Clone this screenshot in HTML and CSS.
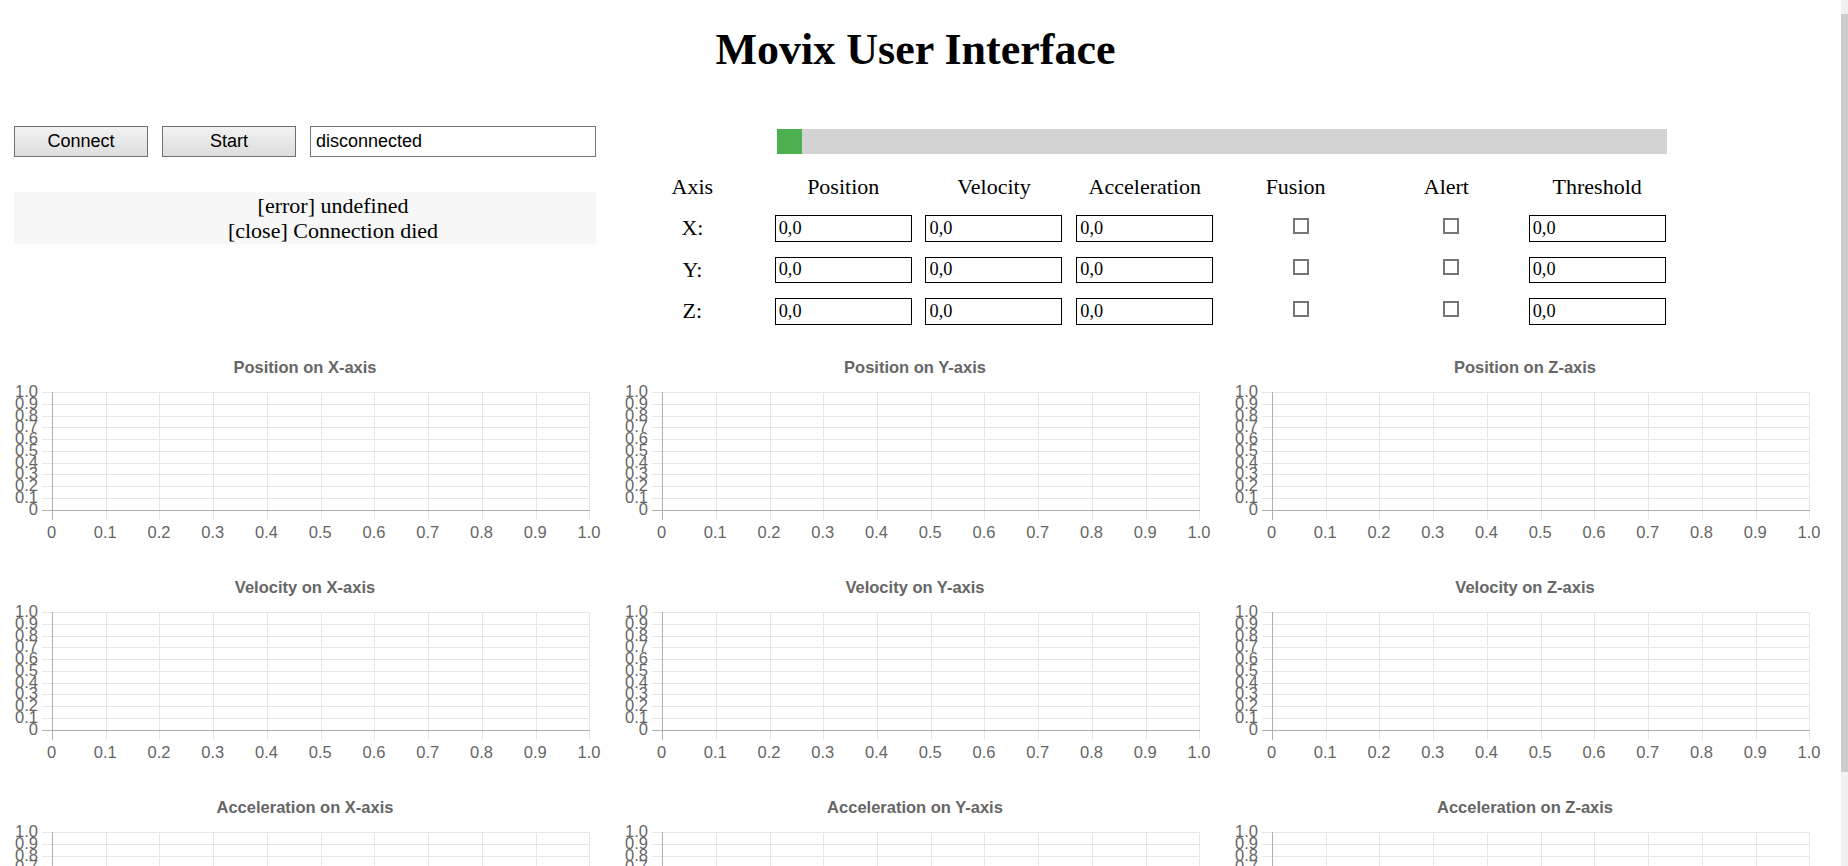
FILE: index.html
```html
<!DOCTYPE html>
<html lang="en">
<head>
<meta charset="utf-8">
<title>Movix User Interface</title>
<link rel="stylesheet" href="styles.css">
</head>
<body>
<div class="page">
  <h1 class="title">Movix User Interface</h1>

  <div class="top">
    <div class="left">
      <div class="controls">
        <button class="btn">Connect</button>
        <button class="btn">Start</button>
        <input class="status" type="text" value="disconnected">
      </div>
      <div class="log">
        <div>[error] undefined</div>
        <div>[close] Connection died</div>
      </div>
    </div>

    <div class="right">
      <div class="progress"><div class="progress-fill"></div></div>
      <div class="table">
        <div class="th">Axis</div>
        <div class="th">Position</div>
        <div class="th">Velocity</div>
        <div class="th">Acceleration</div>
        <div class="th">Fusion</div>
        <div class="th">Alert</div>
        <div class="th">Threshold</div>

        <div class="td">X:</div>
        <div class="td"><input class="num" type="text" value="0,0"></div>
        <div class="td"><input class="num" type="text" value="0,0"></div>
        <div class="td"><input class="num" type="text" value="0,0"></div>
        <div class="td"><input class="check" type="checkbox"></div>
        <div class="td"><input class="check" type="checkbox"></div>
        <div class="td"><input class="num" type="text" value="0,0"></div>

        <div class="td">Y:</div>
        <div class="td"><input class="num" type="text" value="0,0"></div>
        <div class="td"><input class="num" type="text" value="0,0"></div>
        <div class="td"><input class="num" type="text" value="0,0"></div>
        <div class="td"><input class="check" type="checkbox"></div>
        <div class="td"><input class="check" type="checkbox"></div>
        <div class="td"><input class="num" type="text" value="0,0"></div>

        <div class="td">Z:</div>
        <div class="td"><input class="num" type="text" value="0,0"></div>
        <div class="td"><input class="num" type="text" value="0,0"></div>
        <div class="td"><input class="num" type="text" value="0,0"></div>
        <div class="td"><input class="check" type="checkbox"></div>
        <div class="td"><input class="check" type="checkbox"></div>
        <div class="td"><input class="num" type="text" value="0,0"></div>
      </div>
    </div>
  </div>

  <div class="charts">
    <div class="chart">
      <div class="chart-title">Position on X-axis</div>
      <div class="chart-body">
        <div class="y-ticks"><span>1.0</span><span>0.9</span><span>0.8</span><span>0.7</span><span>0.6</span><span>0.5</span><span>0.4</span><span>0.3</span><span>0.2</span><span>0.1</span><span>0</span></div>
        <div class="plot"></div>
      </div>
      <div class="x-ticks"><span>0</span><span>0.1</span><span>0.2</span><span>0.3</span><span>0.4</span><span>0.5</span><span>0.6</span><span>0.7</span><span>0.8</span><span>0.9</span><span>1.0</span></div>
    </div>
    <div class="chart">
      <div class="chart-title">Position on Y-axis</div>
      <div class="chart-body">
        <div class="y-ticks"><span>1.0</span><span>0.9</span><span>0.8</span><span>0.7</span><span>0.6</span><span>0.5</span><span>0.4</span><span>0.3</span><span>0.2</span><span>0.1</span><span>0</span></div>
        <div class="plot"></div>
      </div>
      <div class="x-ticks"><span>0</span><span>0.1</span><span>0.2</span><span>0.3</span><span>0.4</span><span>0.5</span><span>0.6</span><span>0.7</span><span>0.8</span><span>0.9</span><span>1.0</span></div>
    </div>
    <div class="chart">
      <div class="chart-title">Position on Z-axis</div>
      <div class="chart-body">
        <div class="y-ticks"><span>1.0</span><span>0.9</span><span>0.8</span><span>0.7</span><span>0.6</span><span>0.5</span><span>0.4</span><span>0.3</span><span>0.2</span><span>0.1</span><span>0</span></div>
        <div class="plot"></div>
      </div>
      <div class="x-ticks"><span>0</span><span>0.1</span><span>0.2</span><span>0.3</span><span>0.4</span><span>0.5</span><span>0.6</span><span>0.7</span><span>0.8</span><span>0.9</span><span>1.0</span></div>
    </div>

    <div class="chart">
      <div class="chart-title">Velocity on X-axis</div>
      <div class="chart-body">
        <div class="y-ticks"><span>1.0</span><span>0.9</span><span>0.8</span><span>0.7</span><span>0.6</span><span>0.5</span><span>0.4</span><span>0.3</span><span>0.2</span><span>0.1</span><span>0</span></div>
        <div class="plot"></div>
      </div>
      <div class="x-ticks"><span>0</span><span>0.1</span><span>0.2</span><span>0.3</span><span>0.4</span><span>0.5</span><span>0.6</span><span>0.7</span><span>0.8</span><span>0.9</span><span>1.0</span></div>
    </div>
    <div class="chart">
      <div class="chart-title">Velocity on Y-axis</div>
      <div class="chart-body">
        <div class="y-ticks"><span>1.0</span><span>0.9</span><span>0.8</span><span>0.7</span><span>0.6</span><span>0.5</span><span>0.4</span><span>0.3</span><span>0.2</span><span>0.1</span><span>0</span></div>
        <div class="plot"></div>
      </div>
      <div class="x-ticks"><span>0</span><span>0.1</span><span>0.2</span><span>0.3</span><span>0.4</span><span>0.5</span><span>0.6</span><span>0.7</span><span>0.8</span><span>0.9</span><span>1.0</span></div>
    </div>
    <div class="chart">
      <div class="chart-title">Velocity on Z-axis</div>
      <div class="chart-body">
        <div class="y-ticks"><span>1.0</span><span>0.9</span><span>0.8</span><span>0.7</span><span>0.6</span><span>0.5</span><span>0.4</span><span>0.3</span><span>0.2</span><span>0.1</span><span>0</span></div>
        <div class="plot"></div>
      </div>
      <div class="x-ticks"><span>0</span><span>0.1</span><span>0.2</span><span>0.3</span><span>0.4</span><span>0.5</span><span>0.6</span><span>0.7</span><span>0.8</span><span>0.9</span><span>1.0</span></div>
    </div>

    <div class="chart">
      <div class="chart-title">Acceleration on X-axis</div>
      <div class="chart-body">
        <div class="y-ticks"><span>1.0</span><span>0.9</span><span>0.8</span><span>0.7</span><span>0.6</span><span>0.5</span><span>0.4</span><span>0.3</span><span>0.2</span><span>0.1</span><span>0</span></div>
        <div class="plot"></div>
      </div>
      <div class="x-ticks"><span>0</span><span>0.1</span><span>0.2</span><span>0.3</span><span>0.4</span><span>0.5</span><span>0.6</span><span>0.7</span><span>0.8</span><span>0.9</span><span>1.0</span></div>
    </div>
    <div class="chart">
      <div class="chart-title">Acceleration on Y-axis</div>
      <div class="chart-body">
        <div class="y-ticks"><span>1.0</span><span>0.9</span><span>0.8</span><span>0.7</span><span>0.6</span><span>0.5</span><span>0.4</span><span>0.3</span><span>0.2</span><span>0.1</span><span>0</span></div>
        <div class="plot"></div>
      </div>
      <div class="x-ticks"><span>0</span><span>0.1</span><span>0.2</span><span>0.3</span><span>0.4</span><span>0.5</span><span>0.6</span><span>0.7</span><span>0.8</span><span>0.9</span><span>1.0</span></div>
    </div>
    <div class="chart">
      <div class="chart-title">Acceleration on Z-axis</div>
      <div class="chart-body">
        <div class="y-ticks"><span>1.0</span><span>0.9</span><span>0.8</span><span>0.7</span><span>0.6</span><span>0.5</span><span>0.4</span><span>0.3</span><span>0.2</span><span>0.1</span><span>0</span></div>
        <div class="plot"></div>
      </div>
      <div class="x-ticks"><span>0</span><span>0.1</span><span>0.2</span><span>0.3</span><span>0.4</span><span>0.5</span><span>0.6</span><span>0.7</span><span>0.8</span><span>0.9</span><span>1.0</span></div>
    </div>
  </div>
</div>
<div class="scrollbar" aria-hidden="true"><div class="scrollbar-thumb"></div></div>
</body>
</html>
```

FILE: styles.css
```css
body {
  margin: 0;
  background: #ffffff;
  color: #000000;
  font-family: "Liberation Serif", "Times New Roman", serif;
  font-size: 22px;
}

.page {
  width: 1831px;
}

/* page scrollbar drawn over the right edge */
.scrollbar {
  position: fixed;
  top: 0;
  right: 0;
  width: 7px;
  height: 100%;
  background: #f1f1f1;
}

.scrollbar-thumb {
  margin-top: 14px;
  height: 758px;
  background: #cdcdcd;
}

.title {
  margin: 25px 0 0;
  height: 50px;
  line-height: 50px;
  font-size: 44px;
  font-weight: bold;
  text-align: center;
}

/* ---------- top section ---------- */
.top {
  display: flex;
  gap: 21px;
  margin-top: 51px;
  padding-left: 14px;
}

.left {
  width: 582px;
  flex: none;
}

.controls {
  display: flex;
  gap: 14px;
  height: 31px;
}

.btn {
  box-sizing: border-box;
  width: 134px;
  height: 31px;
  margin: 0;
  padding: 0;
  border: 1px solid #707070;
  border-radius: 0;
  background: linear-gradient(to bottom, #f2f2f2, #dddddd);
  font-family: "Liberation Sans", Arial, sans-serif;
  font-size: 18px;
  color: #000000;
}

.status {
  box-sizing: border-box;
  flex: 1;
  height: 31px;
  margin: 0;
  padding: 0 5px;
  border: 1px solid #767676;
  border-radius: 0;
  font-family: "Liberation Sans", Arial, sans-serif;
  font-size: 18px;
  color: #000000;
  outline: none;
}

.log {
  margin-top: 35px;
  padding: 1px 0 1px 56px;
  background: #f7f7f7;
  text-align: center;
  line-height: 25px;
}

.right {
  width: 1056px;
  flex: none;
}

.progress {
  margin: 3px 0 0 160px;
  width: 890px;
  height: 25px;
  background: #d3d3d3;
}

.progress-fill {
  width: 25px;
  height: 25px;
  background: #4caf50;
}

.table {
  margin-top: 12px;
  display: grid;
  grid-template-columns: repeat(7, 150.8px);
  grid-template-rows: 41px 41.5px 41.5px 41.5px;
  align-items: center;
  justify-items: center;
}

.th,
.td {
  line-height: 25px;
}

.num {
  box-sizing: border-box;
  width: 137px;
  height: 26.5px;
  margin: 0;
  padding: 0 3px;
  border: 1px solid #000000;
  border-radius: 0;
  font-family: "Liberation Serif", "Times New Roman", serif;
  font-size: 18.3px;
  color: #000000;
  outline: none;
}

.check {
  appearance: none;
  -webkit-appearance: none;
  box-sizing: border-box;
  width: 16px;
  height: 16px;
  margin: 0 0 4px 10px;
  border: 2px solid #767676;
  border-radius: 0;
  background: #ffffff;
  display: block;
}

/* ---------- charts ---------- */
.charts {
  margin-top: 18.5px;
  display: grid;
  grid-template-columns: repeat(3, 610px);
  row-gap: 20px;
}

.chart {
  width: 610px;
  height: 200px;
  font-family: "Liberation Sans", Arial, Helvetica, sans-serif;
  color: #666666;
}

.chart-title {
  height: 34px;
  line-height: 34px;
  text-align: center;
  font-size: 16.5px;
  font-weight: bold;
}

.chart-body {
  display: flex;
  height: 136px;
}

.y-ticks {
  width: 38px;
  margin-right: 4px;
  padding-top: 2.125px;
  display: flex;
  flex-direction: column;
  font-size: 16.5px;
}

.y-ticks span {
  display: block;
  height: 11.75px;
  line-height: 11.75px;
  text-align: right;
  white-space: nowrap;
}

.plot {
  width: 548px;
  height: 128px;
  margin-top: 8px;
  background:
    linear-gradient(#b0b0b0, #b0b0b0) 9.5px 0 / 1px 128px no-repeat,
    linear-gradient(#b0b0b0, #b0b0b0) 0 117.5px / 548px 1px no-repeat,
    repeating-linear-gradient(to right, #e6e6e6 0 1px, transparent 1px 53.75px) 9.5px 0 / 539px 128px no-repeat,
    repeating-linear-gradient(to bottom, #e6e6e6 0 1px, transparent 1px 11.75px) 0 0 / 548px 118.5px no-repeat;
}

.x-ticks {
  display: flex;
  padding-left: 24.625px;
  height: 24px;
  line-height: 24px;
  font-size: 16.5px;
}

.x-ticks span {
  flex: none;
  width: 53.75px;
  text-align: center;
}
```
